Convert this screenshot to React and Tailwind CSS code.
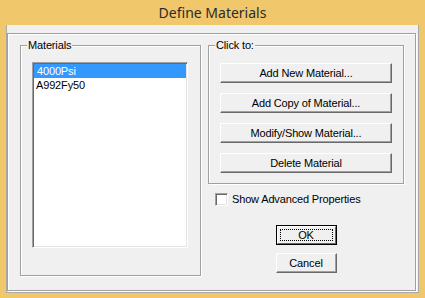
import React from "react";

function Btn({ children, className = "" }) {
  return (
    <div
      className={
        "h-[20px] flex items-center justify-center bg-[#f0f0f0] border border-t-white border-l-white border-r-[#696969] border-b-[#696969] shadow-[inset_-1px_-1px_0_#a0a0a0] " +
        className
      }
    >
      <span className="leading-none">{children}</span>
    </div>
  );
}

function Group({ label, className = "", children }) {
  return (
    <div
      className={
        "relative border border-[#a0a0a0] shadow-[1px_1px_0_#ffffff,inset_1px_1px_0_#ffffff] " +
        className
      }
    >
      <span className="absolute left-[6px] top-[-8px] bg-[#f0f0f0] px-[1px] leading-[14px]">
        {label}
      </span>
      {children}
    </div>
  );
}

export default function App() {
  return (
    <div
      className="w-[425px] h-[298px] bg-[#f0c86b] flex flex-col text-[11px] text-black tracking-[-0.15px]"
      style={{ fontFamily: '"Liberation Sans", Arial, sans-serif' }}
    >
      <div
        className="h-[25px] flex items-center justify-center text-[14px] text-[#2b2b2b] tracking-normal pb-[1px]"
        style={{ fontFamily: '"Noto Sans", sans-serif' }}
      >
        Define Materials
      </div>
      <div className="flex-1 mx-[6px] mb-[5px] border-x border-b border-[#a9a9a9] bg-[#f0f0f0] pt-[8px] pr-[2px] pb-[1px] flex flex-col">
        <div className="flex-1 border border-[#a0a0a0] shadow-[1px_1px_0_#ffffff,inset_1px_1px_0_#ffffff] flex items-start pl-[12px] pt-[11px]">
          <Group label="Materials" className="w-[181px] h-[231px] pl-[11px] pt-[16px]">
            <div className="w-[156px] h-[186px] bg-white border border-t-[#a0a0a0] border-l-[#a0a0a0] border-r-white border-b-white shadow-[inset_1px_1px_0_#696969,inset_-1px_-1px_0_#e3e3e3] pt-[1px] pl-[1px] pr-[1px]">
              <div className="h-[14px] bg-[#3399ff] text-white pl-[3px] flex items-center leading-none">
                4000Psi
              </div>
              <div className="h-[14px] pl-[2px] flex items-center leading-none">
                A992Fy50
              </div>
            </div>
          </Group>
          <div className="ml-[7px] w-[196px] flex flex-col">
            <Group label="Click to:" className="h-[139px] pl-[11px] pt-[17px] flex flex-col gap-[10px]">
              <Btn className="w-[172px]">Add New Material...</Btn>
              <Btn className="w-[172px]">Add Copy of Material...</Btn>
              <Btn className="w-[172px]">Modify/Show Material...</Btn>
              <Btn className="w-[172px]">Delete Material</Btn>
            </Group>
            <div className="mt-[9px] ml-[7px] flex items-center gap-[4px]">
              <div className="w-[13px] h-[13px] bg-white border border-t-[#a0a0a0] border-l-[#a0a0a0] border-r-white border-b-white shadow-[inset_1px_1px_0_#696969,inset_-1px_-1px_0_#e3e3e3]" />
              <span className="leading-none">Show Advanced Properties</span>
            </div>
            <div className="mt-[19px] flex flex-col items-center gap-[8px]">
              <div className="w-[61px] h-[20px] border border-black">
                <div className="relative h-full flex items-center justify-center bg-[#f0f0f0] border border-t-white border-l-white border-r-[#696969] border-b-[#696969]">
                  <div className="absolute inset-[2px] border border-dotted border-black" />
                  <span className="leading-none">OK</span>
                </div>
              </div>
              <Btn className="w-[61px]">Cancel</Btn>
            </div>
          </div>
        </div>
      </div>
    </div>
  );
}
